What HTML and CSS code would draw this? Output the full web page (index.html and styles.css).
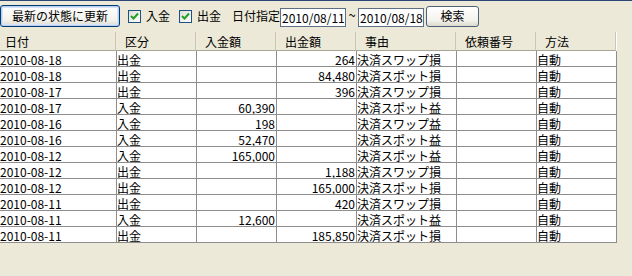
FILE: index.html
```html
<!DOCTYPE html>
<html lang="ja">
<head>
    <meta charset="UTF-8">
    <title>入出金履歴</title>
    <link rel="stylesheet" href="styles.css">
</head>
<body>
<div class="window">
    <div class="toolbar">
        <button class="btn btn-default">最新の状態に更新</button>
        <label class="check">
            <span class="box"><svg width="11" height="11" viewBox="0 0 11 11"><path d="M2 5 L4.5 7.5 L9 2.5" fill="none" stroke="#21a121" stroke-width="2"/></svg></span>入金
        </label>
        <label class="check">
            <span class="box"><svg width="11" height="11" viewBox="0 0 11 11"><path d="M2 5 L4.5 7.5 L9 2.5" fill="none" stroke="#21a121" stroke-width="2"/></svg></span>出金
        </label>
        <span class="caption">日付指定</span>
        <span class="field">2010/08/11</span>
        <span class="tilde">~</span>
        <span class="field">2010/08/18</span>
        <button class="btn btn-search">検索</button>
    </div>

    <div class="grid">
        <div class="row head">
            <div class="cell">日付</div>
            <div class="cell">区分</div>
            <div class="cell">入金額</div>
            <div class="cell">出金額</div>
            <div class="cell">事由</div>
            <div class="cell">依頼番号</div>
            <div class="cell">方法</div>
        </div>
        <div class="row"><div class="cell">2010-08-18</div><div class="cell">出金</div><div class="cell num"></div><div class="cell num">264</div><div class="cell">決済スワップ損</div><div class="cell"></div><div class="cell">自動</div></div>
        <div class="row"><div class="cell">2010-08-18</div><div class="cell">出金</div><div class="cell num"></div><div class="cell num">84,480</div><div class="cell">決済スポット損</div><div class="cell"></div><div class="cell">自動</div></div>
        <div class="row"><div class="cell">2010-08-17</div><div class="cell">出金</div><div class="cell num"></div><div class="cell num">396</div><div class="cell">決済スワップ損</div><div class="cell"></div><div class="cell">自動</div></div>
        <div class="row"><div class="cell">2010-08-17</div><div class="cell">入金</div><div class="cell num">60,390</div><div class="cell num"></div><div class="cell">決済スポット益</div><div class="cell"></div><div class="cell">自動</div></div>
        <div class="row"><div class="cell">2010-08-16</div><div class="cell">入金</div><div class="cell num">198</div><div class="cell num"></div><div class="cell">決済スワップ益</div><div class="cell"></div><div class="cell">自動</div></div>
        <div class="row"><div class="cell">2010-08-16</div><div class="cell">入金</div><div class="cell num">52,470</div><div class="cell num"></div><div class="cell">決済スポット益</div><div class="cell"></div><div class="cell">自動</div></div>
        <div class="row"><div class="cell">2010-08-12</div><div class="cell">入金</div><div class="cell num">165,000</div><div class="cell num"></div><div class="cell">決済スポット益</div><div class="cell"></div><div class="cell">自動</div></div>
        <div class="row"><div class="cell">2010-08-12</div><div class="cell">出金</div><div class="cell num"></div><div class="cell num">1,188</div><div class="cell">決済スワップ損</div><div class="cell"></div><div class="cell">自動</div></div>
        <div class="row"><div class="cell">2010-08-12</div><div class="cell">出金</div><div class="cell num"></div><div class="cell num">165,000</div><div class="cell">決済スポット損</div><div class="cell"></div><div class="cell">自動</div></div>
        <div class="row"><div class="cell">2010-08-11</div><div class="cell">出金</div><div class="cell num"></div><div class="cell num">420</div><div class="cell">決済スワップ損</div><div class="cell"></div><div class="cell">自動</div></div>
        <div class="row"><div class="cell">2010-08-11</div><div class="cell">入金</div><div class="cell num">12,600</div><div class="cell num"></div><div class="cell">決済スポット益</div><div class="cell"></div><div class="cell">自動</div></div>
        <div class="row"><div class="cell">2010-08-11</div><div class="cell">出金</div><div class="cell num"></div><div class="cell num">185,850</div><div class="cell">決済スポット損</div><div class="cell"></div><div class="cell">自動</div></div>
    </div>
</div>
</body>
</html>
```

FILE: styles.css
```css
body {
    margin: 0;
    background-color: #ECE9D8;
    font-family: "Noto Sans CJK JP", sans-serif;
    font-size: 12px;
    color: #000;
    overflow: hidden;
}

.window {
    border-top: 1px solid #2a4576;
    height: 275px;
}

/* toolbar */
.toolbar {
    display: flex;
    align-items: center;
    height: 30px;
    padding-bottom: 1px;
}

.btn {
    box-sizing: border-box;
    font-family: inherit;
    font-size: 12px;
    line-height: 12px;
    color: #000;
    border: 1px solid #003c74;
    border-radius: 3px;
    background: linear-gradient(#ffffff, #f3f2ec 70%, #dcdad0);
    padding: 0;
    margin: 0;
}

.btn-default {
    width: 120px;
    height: 22px;
    box-shadow: inset 0 0 0 1px #b7cdf2, inset 0 0 0 2px #d6e3f8;
}

.btn-search {
    width: 53px;
    height: 21px;
    margin-left: 2px;
    border-color: #4e5f78;
}

.check {
    display: flex;
    align-items: center;
    margin-left: 8px;
    line-height: 12px;
}

.check + .check {
    margin-left: 9px;
}

.box {
    box-sizing: border-box;
    width: 13px;
    height: 13px;
    border: 1px solid #1c5180;
    background: linear-gradient(135deg, #dcdcd7, #ffffff);
    margin-right: 5px;
    display: flex;
}

.caption {
    margin-left: 11px;
    line-height: 12px;
}

.field {
    box-sizing: border-box;
    width: 66px;
    height: 19px;
    margin-top: 2px;
    border: 1px solid #5d6f87;
    background: #fff;
    padding: 2px 0 0 1px;
    line-height: 13px;
    overflow: hidden;
    white-space: nowrap;
}

.tilde {
    width: 12px;
    text-align: center;
    line-height: 12px;
    font-size: 13px;
    margin-top: -3px;
}

/* grid */
.grid {
    margin-left: -4px;
}

.row {
    display: grid;
    grid-template-columns: 121px 80px 80px 80px 100px 80px 80px;
    height: 16px;
}

.cell {
    box-sizing: border-box;
    height: 16px;
    background: #fff;
    border-right: 1px solid #8d8d8d;
    border-bottom: 1px solid #8d8d8d;
    padding-top: 3px;
    line-height: 12px;
    white-space: nowrap;
    overflow: hidden;
}

.cell:first-child {
    padding-left: 4px;
}

.num {
    text-align: right;
    padding-right: 1px;
}

.row.head {
    height: 19px;
    grid-template-columns: 120px 80px 80px 80px 100px 80px 80px 20px;
}

.head .cell {
    height: 19px;
    background: #ECE9D8;
    border-right: 1px solid #c9c6b6;
    box-shadow: 1px 0 0 #fff;
    border-bottom: 1px solid #a7a594;
    padding: 4px 0 0 9px;
    font-size: 12px;
}
```
